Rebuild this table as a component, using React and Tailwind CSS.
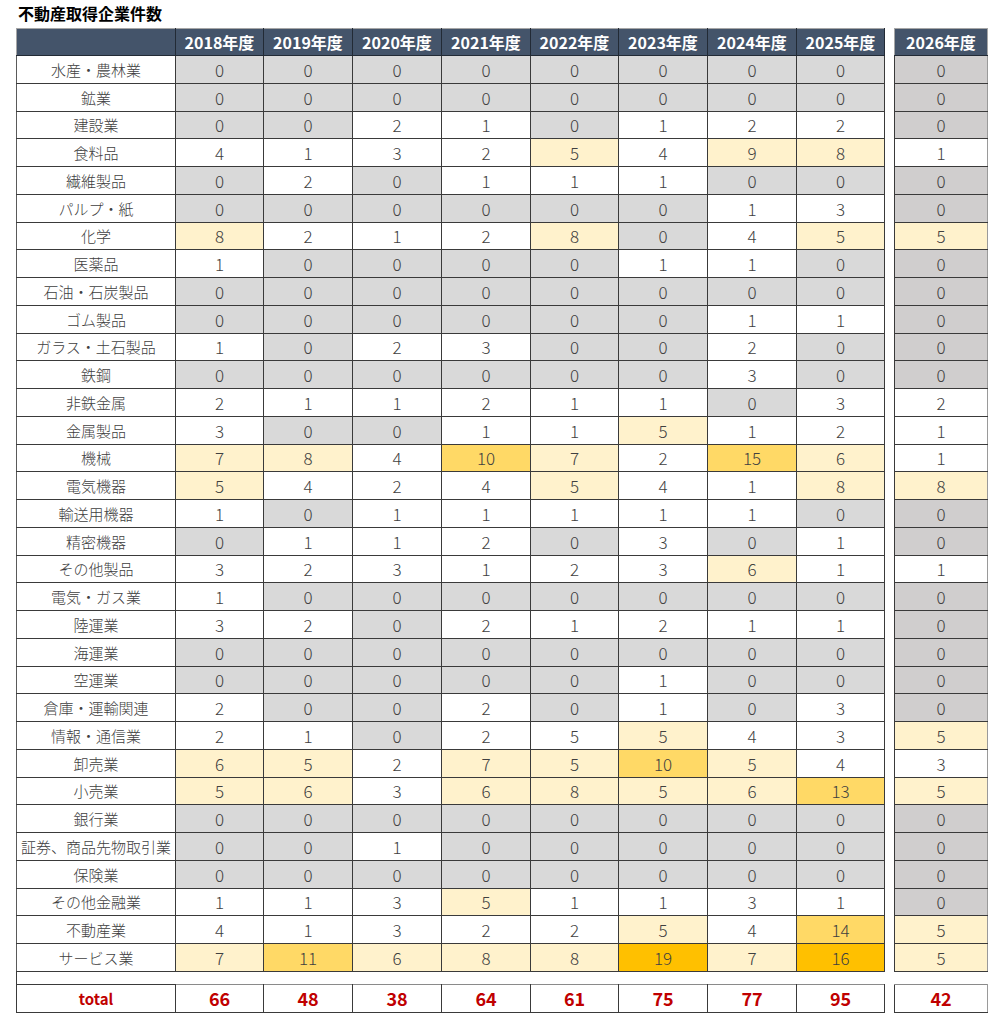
import React from 'react';

const years = ['2018年度', '2019年度', '2020年度', '2021年度', '2022年度', '2023年度', '2024年度', '2025年度'];

// value + colour flag: g = gray, l = light yellow, m = mid yellow, d = dark yellow
const rows = [
  ['水産・農林業', '0g 0g 0g 0g 0g 0g 0g 0g', '0g'],
  ['鉱業', '0g 0g 0g 0g 0g 0g 0g 0g', '0g'],
  ['建設業', '0g 0g 2 1 0g 1 2 2', '0g'],
  ['食料品', '4 1 3 2 5l 4 9l 8l', '1'],
  ['繊維製品', '0g 2 0g 1 1 1 0g 0g', '0g'],
  ['パルプ・紙', '0g 0g 0g 0g 0g 0g 1 3', '0g'],
  ['化学', '8l 2 1 2 8l 0g 4 5l', '5l'],
  ['医薬品', '1 0g 0g 0g 0g 1 1 0g', '0g'],
  ['石油・石炭製品', '0g 0g 0g 0g 0g 0g 0g 0g', '0g'],
  ['ゴム製品', '0g 0g 0g 0g 0g 0g 1 1', '0g'],
  ['ガラス・土石製品', '1 0g 2 3 0g 0g 2 0g', '0g'],
  ['鉄鋼', '0g 0g 0g 0g 0g 0g 3 0g', '0g'],
  ['非鉄金属', '2 1 1 2 1 1 0g 3', '2'],
  ['金属製品', '3 0g 0g 1 1 5l 1 2', '1'],
  ['機械', '7l 8l 4 10m 7l 2 15m 6l', '1'],
  ['電気機器', '5l 4 2 4 5l 4 1 8l', '8l'],
  ['輸送用機器', '1 0g 1 1 1 1 1 0g', '0g'],
  ['精密機器', '0g 1 1 2 0g 3 0g 1', '0g'],
  ['その他製品', '3 2 3 1 2 3 6l 1', '1'],
  ['電気・ガス業', '1 0g 0g 0g 0g 0g 0g 0g', '0g'],
  ['陸運業', '3 2 0g 2 1 2 1 1', '0g'],
  ['海運業', '0g 0g 0g 0g 0g 0g 0g 0g', '0g'],
  ['空運業', '0g 0g 0g 0g 0g 1 0g 0g', '0g'],
  ['倉庫・運輸関連', '2 0g 0g 2 0g 1 0g 3', '0g'],
  ['情報・通信業', '2 1 0g 2 5 5l 4 3', '5l'],
  ['卸売業', '6l 5l 2 7l 5l 10m 5l 4', '3'],
  ['小売業', '5l 6l 3 6l 8l 5l 6l 13m', '5l'],
  ['銀行業', '0g 0g 0g 0g 0g 0g 0g 0g', '0g'],
  ['証券、商品先物取引業', '0g 0g 1 0g 0g 0g 0g 0g', '0g'],
  ['保険業', '0g 0g 0g 0g 0g 0g 0g 0g', '0g'],
  ['その他金融業', '1 1 3 5l 1 1 3 1', '0g'],
  ['不動産業', '4 1 3 2 2 5l 4 14m', '5l'],
  ['サービス業', '7l 11m 6l 8l 8l 19d 7l 16d', '5l'],
];

const totals = [66, 48, 38, 64, 61, 75, 77, 95];

const fills = {
  g: 'bg-[#d9d9d9]',
  l: 'bg-[#fff2cc]',
  m: 'bg-[#ffd966]',
  d: 'bg-[#ffc000]',
  w: 'bg-white',
};

function parse(cell) {
  const m = cell.match(/^(\d+)([glmd]?)$/);
  return { value: m[1], flag: m[2] || 'w' };
}

const cellBase = 'border border-[#3a3a3a] text-center text-[17px] font-light text-[#404040] p-0';

export default function App() {
  return (
    <div
      className="w-[1000px] h-[1024px] bg-white relative"
      style={{ fontFamily: '"Noto Sans CJK JP", "Noto Sans", sans-serif' }}
    >
      <div className="pl-[18px] pt-[3px] h-[28px] text-[16px] font-bold text-black leading-[20px]">
        不動産取得企業件数
      </div>

      <div className="flex items-start gap-[9px] pl-[16px]">
        {/* main table */}
        <table className="border-collapse table-fixed w-[868px]">
          <colgroup>
            <col className="w-[159px]" />
            {[88, 89, 89, 89, 88, 89, 89, 88].map((w, i) => (
              <col key={i} style={{ width: w }} />
            ))}
          </colgroup>
          <thead>
            <tr className="h-[27px] bg-[#44546a]">
              <th className="border border-[#222a35] border-t-[#a6a6a6] border-l-[#a6a6a6]" />
              {years.map((y) => (
                <th
                  key={y}
                  className="border border-[#222a35] border-t-[#a6a6a6] text-white text-[16px] font-bold p-0 leading-none"
                >
                  {y}
                </th>
              ))}
            </tr>
          </thead>
          <tbody>
            {rows.map(([label, vals]) => (
              <tr key={label} className="h-[27.75px]">
                <td className="border border-[#3a3a3a] border-l-[#5a5a5a] text-center text-[15px] font-light text-[#404040] p-0 whitespace-nowrap leading-none">
                  {label}
                </td>
                {vals.split(' ').map((c, i) => {
                  const { value, flag } = parse(c);
                  return (
                    <td key={i} className={`${cellBase} ${fills[flag]} leading-none`}>
                      {value}
                    </td>
                  );
                })}
              </tr>
            ))}
            <tr className="h-[13px]">
              <td colSpan={9} className="p-0 border-l border-l-[#3a3a3a]" />
            </tr>
            <tr className="h-[28px]">
              <td className="border border-[#3a3a3a] text-center text-[15px] font-bold text-[#c00000] p-0 leading-none">
                total
              </td>
              {totals.map((t, i) => (
                <td
                  key={i}
                  className="border border-[#3a3a3a] border-t-[#8a8a8a] text-center text-[18px] font-bold text-[#c00000] p-0 leading-none"
                >
                  {t}
                </td>
              ))}
            </tr>
          </tbody>
        </table>

        {/* 2026 table */}
        <table className="border-collapse table-fixed w-[94px]">
          <thead>
            <tr className="h-[27px] bg-[#44546a]">
              <th className="border border-[#222a35] border-t-[#a6a6a6] border-x-[#a6a6a6] text-white text-[16px] font-bold p-0 leading-none">
                2026年度
              </th>
            </tr>
          </thead>
          <tbody>
            {rows.map(([label, , v26]) => {
              const { value, flag } = parse(v26);
              const fill = flag === 'g' ? 'bg-[#d0cece]' : fills[flag];
              return (
                <tr key={label} className="h-[27.75px]">
                  <td className={`${cellBase} border-r-[#9a9a9a] ${fill} leading-none`}>{value}</td>
                </tr>
              );
            })}
            <tr className="h-[13px]">
              <td className="p-0" />
            </tr>
            <tr className="h-[28px]">
              <td className="border border-[#3a3a3a] border-t-[#8a8a8a] border-r-[#9a9a9a] text-center text-[18px] font-bold text-[#c00000] p-0 leading-none">
                42
              </td>
            </tr>
          </tbody>
        </table>
      </div>
    </div>
  );
}
